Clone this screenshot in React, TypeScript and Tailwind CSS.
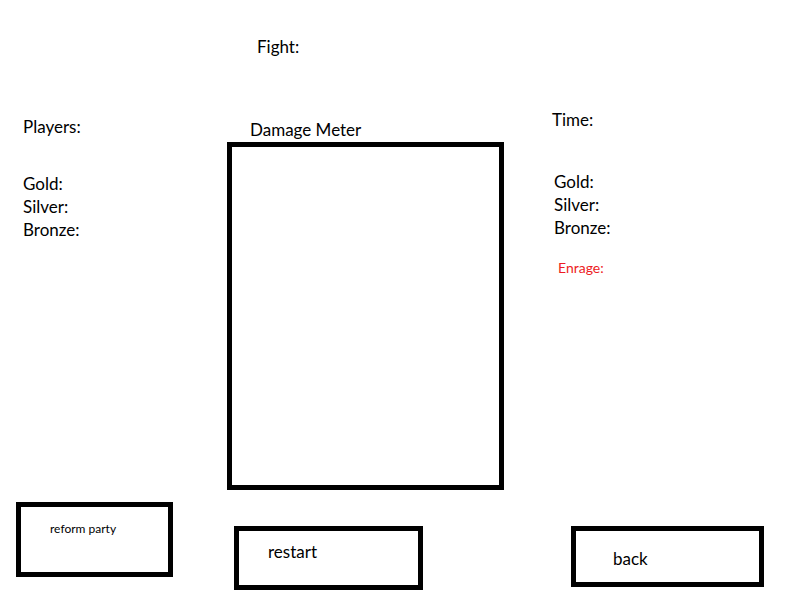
export default function App() {
  const font = { fontFamily: "Lato, 'Open Sans', sans-serif" };
  return (
    <div className="w-[800px] h-[600px] bg-white text-black flex flex-col overflow-hidden" style={font}>
      <div className="h-[58px] pt-[35px] pl-[257px] text-[17px] leading-[23px]">Fight:</div>
      <div className="flex h-[432px]">
        <div className="w-[227px] pl-[23px] pt-[57px] text-[17px] leading-[23px]">
          <div>Players:</div>
          <div className="mt-[34px]">
            <div>Gold:</div>
            <div>Silver:</div>
            <div>Bronze:</div>
          </div>
        </div>
        <div className="w-[277px] pt-[60px] flex flex-col">
          <div className="pl-[23px] text-[17px] leading-[23px]">Damage Meter</div>
          <div className="mt-[1px] h-[348px] border-[5px] border-black"></div>
        </div>
        <div className="pl-[48px] pt-[50px] text-[17px] leading-[23px]">
          <div>Time:</div>
          <div className="mt-[39px] pl-[2px]">
            <div>Gold:</div>
            <div>Silver:</div>
            <div>Bronze:</div>
          </div>
          <div className="mt-[20px] pl-[6px] text-[14px] leading-[18px] text-[#ED1C24]">Enrage:</div>
        </div>
      </div>
      <div className="flex items-start">
        <div className="ml-[16px] mt-[12px] w-[157px] h-[75px] border-[5px] border-black pl-[29px] pt-[14px] text-[12px] leading-[15px]">
          reform party
        </div>
        <div className="ml-[61px] mt-[36px] w-[189px] h-[64px] border-[5px] border-black pl-[29px] pt-[9px] text-[17px] leading-[23px]">
          restart
        </div>
        <div className="ml-[148px] mt-[36px] w-[193px] h-[61px] border-[5px] border-black pl-[37px] pt-[16px] text-[17px] leading-[23px]">
          back
        </div>
      </div>
    </div>
  );
}
